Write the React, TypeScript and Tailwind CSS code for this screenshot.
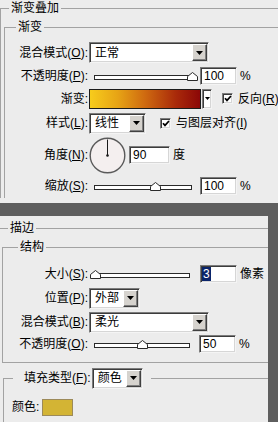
import React from "react";

const sunken =
  "bg-white border border-t-[#7c7c7c] border-l-[#7c7c7c] border-r-[#f4f4f4] border-b-[#f4f4f4] shadow-[inset_1px_1px_0_#3c3c3c,inset_-1px_-1px_0_#d6d6d6]";
const raised =
  "bg-[#d6d3ce] border border-t-[#ffffff] border-l-[#ffffff] border-r-[#404040] border-b-[#404040] shadow-[inset_-1px_-1px_0_#808080]";

function Label({ className, children }: { className: string; children: React.ReactNode }) {
  return <div className={`shrink-0 text-right whitespace-nowrap ${className}`}>{children}</div>;
}

function Arrow() {
  return (
    <svg width="7" height="4" viewBox="0 0 7 4">
      <polygon points="0,0 7,0 3.5,4" fill="#000" />
    </svg>
  );
}

function Select({ className, text }: { className: string; text: string }) {
  return (
    <div className={`${sunken} shrink-0 h-[21px] flex items-center ${className}`}>
      <span className="pl-[5px] flex-1 whitespace-nowrap">{text}</span>
      <div className={`${raised} w-[15px] h-[17px] mr-px flex items-center justify-center`}>
        <Arrow />
      </div>
    </div>
  );
}

function Slider({ className, thumb }: { className: string; thumb: string }) {
  return (
    <div className={`relative shrink-0 ml-[3px] h-[10px] flex items-end pb-px ${className}`}>
      <div className="mx-[3px] flex-1 h-[5px] border border-[#2a2a2a] bg-white" />
      <svg className={`absolute bottom-0 ${thumb}`} width="11" height="9" viewBox="0 0 11 9">
        <polygon points="0.5,8.5 0.5,4.5 5.5,0.5 10.5,4.5 10.5,8.5" fill="#fff" stroke="#2a2a2a" strokeWidth="1" />
      </svg>
    </div>
  );
}

function Input({ className, children }: { className: string; children: React.ReactNode }) {
  return (
    <div className={`${sunken} shrink-0 h-[18px] flex items-center pl-[3px] ${className}`}>{children}</div>
  );
}

function Check({ className }: { className: string }) {
  return (
    <div className={`${sunken} shrink-0 w-[11px] h-[11px] flex items-center justify-center ${className}`}>
      <svg width="8" height="7" viewBox="0 0 8 7">
        <path d="M1 3.2 L3 5.4 L7 1" fill="none" stroke="#000" strokeWidth="1.7" />
      </svg>
    </div>
  );
}

export default function App() {
  return (
    <div className="w-[278px] h-[422px] overflow-hidden bg-[#5e5e5e] text-black text-[12px] leading-[16px] font-['Liberation_Sans','Noto_Sans_CJK_SC',sans-serif]">
      {/* 渐变叠加 panel */}
      <div className="h-[203px] bg-[#ececec] overflow-hidden">
        <fieldset className="border-t border-l border-[#a2a2a2]">
          <legend className="ml-[8px] px-[2px]">渐变叠加</legend>
          <fieldset className="ml-[3px] mt-[3px] border-t border-l border-[#a2a2a2]">
            <legend className="ml-[11px] px-[2px]">渐变</legend>
            <div className="pt-[5px]">
              <div className="h-[25px] flex items-center">
                <Label className="w-[83px]">
                  混合模式(<u>O</u>):
                </Label>
                <Select className="ml-px w-[120px]" text="正常" />
              </div>
              <div className="h-[22px] flex items-center">
                <Label className="w-[83px]">
                  不透明度(<u>P</u>):
                </Label>
                <Slider className="w-[104px]" thumb="left-[96px]" />
                <Input className="ml-[5px] w-[37px]">100</Input>
                <span className="ml-[3px]">%</span>
              </div>
              <div className="h-[23px] flex items-center">
                <Label className="w-[83px]">渐变:</Label>
                <div className="shrink-0 ml-px w-[112px] h-[20px] border border-[#1c1c1c] bg-[linear-gradient(to_right,#f7cc1c,#e7a415_25%,#cf6a10_50%,#a92a0a_78%,#8c0707)]" />
                <div className={`${sunken} shrink-0 ml-px w-[10px] h-[20px] flex items-center justify-center`}>
                  <svg width="5" height="3" viewBox="0 0 5 3">
                    <polygon points="0,0 5,0 2.5,3" fill="#000" />
                  </svg>
                </div>
                <Check className="ml-[10px]" />
                <span className="ml-[5px] shrink-0 whitespace-nowrap">
                  反向(<u>R</u>)
                </span>
              </div>
              <div className="h-[26px] flex items-center">
                <Label className="w-[83px]">
                  样式(<u>L</u>):
                </Label>
                <Select className="ml-px w-[57px]" text="线性" />
                <Check className="ml-[14px]" />
                <span className="ml-[5px] shrink-0 whitespace-nowrap">
                  与图层对齐(<u>I</u>)
                </span>
              </div>
              <div className="h-[38px] flex items-center">
                <Label className="w-[83px]">
                  角度(<u>N</u>):
                </Label>
                <svg className="ml-px shrink-0" width="37" height="37" viewBox="0 0 37 37">
                  <circle cx="18.5" cy="18.5" r="17.3" fill="#f4efef" stroke="#5a5a5a" strokeWidth="1.4" />
                  <line x1="18.5" y1="2.5" x2="18.5" y2="18.5" stroke="#1a1a1a" strokeWidth="1" />
                  <circle cx="18.5" cy="18.5" r="1.3" fill="#1a1a1a" />
                </svg>
                <Input className="ml-[3px] w-[41px] h-[17px]">90</Input>
                <span className="ml-[3px]">度</span>
              </div>
              <div className="h-[24px] flex items-center">
                <Label className="w-[83px]">
                  缩放(<u>S</u>):
                </Label>
                <Slider className="w-[104px]" thumb="left-[59px]" />
                <Input className="ml-[5px] w-[37px]">100</Input>
                <span className="ml-[3px]">%</span>
              </div>
            </div>
          </fieldset>
        </fieldset>
      </div>

      <div className="h-[13px]" />

      {/* 描边 panel */}
      <div className="w-[268px] h-[206px] bg-[#ececec] overflow-hidden">
        <fieldset className="mt-[4px] border-t border-[#a2a2a2]">
          <legend className="ml-[8px] px-[2px]">描边</legend>
          <fieldset className="ml-[2px] mt-[3px] border-t border-l border-b border-[#a2a2a2]">
            <legend className="ml-[15px] px-[2px]">结构</legend>
            <div className="pt-[7px] pb-[8px]">
              <div className="h-[24px] flex items-center">
                <Label className="w-[85px]">
                  大小(<u>S</u>):
                </Label>
                <Slider className="w-[102px]" thumb="-left-px" />
                <Input className="ml-[7px] w-[37px] pl-px">
                  <span className="inline-block h-[14px] leading-[14px] px-px bg-[#0a246a] text-white">3</span>
                </Input>
                <span className="ml-[3px] whitespace-nowrap">像素</span>
              </div>
              <div className="h-[24px] flex items-center">
                <Label className="w-[85px]">
                  位置(<u>P</u>):
                </Label>
                <Select className="ml-px w-[51px]" text="外部" />
              </div>
              <div className="h-[24px] flex items-center">
                <Label className="w-[85px]">
                  混合模式(<u>B</u>):
                </Label>
                <Select className="ml-px w-[120px]" text="柔光" />
              </div>
              <div className="h-[20px] flex items-center">
                <Label className="w-[85px]">
                  不透明度(<u>O</u>):
                </Label>
                <Slider className="w-[102px]" thumb="left-[46px]" />
                <Input className="ml-[6px] w-[37px]">50</Input>
                <span className="ml-[3px]">%</span>
              </div>
            </div>
          </fieldset>
          <fieldset className="ml-[3px] mt-[5px] border-t border-l border-[#a2a2a2]">
            <legend className="ml-[9px] pl-[11px] pr-[8px]">
              <span className="inline-flex items-center h-[20px]">
                <span className="whitespace-nowrap">
                  填充类型(<u>F</u>):
                </span>
                <Select className="ml-px w-[51px]" text="颜色" />
              </span>
            </legend>
            <div className="pt-[7px] h-[40px]">
              <div className="h-[24px] flex items-center">
                <span className="ml-[8px] whitespace-nowrap">颜色:</span>
                <div className="ml-[3px] w-[31px] h-[17px] bg-[#d3b434] border border-[#9c8a5a]" />
              </div>
            </div>
          </fieldset>
        </fieldset>
      </div>
    </div>
  );
}
